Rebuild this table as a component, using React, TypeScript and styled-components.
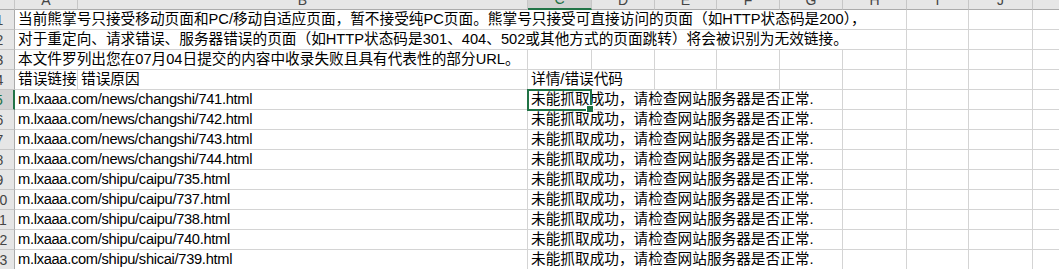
import React from 'react'
import styled, { createGlobalStyle } from 'styled-components'

const GREEN = '#217346'
const GRID = '#d4d4d4'

// widths of the row header and columns A..K
const COLS = [30, 63, 450, 64, 63, 62, 63, 63, 64, 62, 64, 64]
const LETTERS = ['A', 'B', 'C', 'D', 'E', 'F', 'G', 'H', 'I', 'J', 'K']
const TEMPLATE = COLS.map((w) => `${w}px`).join(' ')

const GlobalStyle = createGlobalStyle`
  html, body {
    margin: 0;
    padding: 0;
    background: #fff;
    overflow: hidden;
  }
`

const Sheet = styled.div`
  display: flex;
  flex-direction: column;
  margin-top: -10px;
  margin-left: -15px;
  font-family: "Liberation Sans", "Noto Sans CJK SC", sans-serif;
`

const Row = styled.div`
  display: grid;
  grid-template-columns: ${TEMPLATE};
  height: 20px;
`

const ColHeader = styled.div<{ $active?: boolean }>`
  box-sizing: border-box;
  display: flex;
  align-items: center;
  justify-content: center;
  background: ${(p) => (p.$active ? '#d2d2d2' : '#e6e6e6')};
  color: ${(p) => (p.$active ? GREEN : '#444')};
  border-right: 1px solid #c6c6c6;
  border-bottom: ${(p) => (p.$active ? `2px solid ${GREEN}` : '1px solid #ababab')};
  font-size: 14px;
`

const RowHeader = styled.div<{ $active?: boolean }>`
  box-sizing: border-box;
  display: flex;
  align-items: center;
  justify-content: center;
  background: ${(p) => (p.$active ? '#d2d2d2' : '#e6e6e6')};
  color: ${(p) => (p.$active ? GREEN : '#444')};
  border-right: ${(p) => (p.$active ? `2px solid ${GREEN}` : '1px solid #ababab')};
  border-bottom: 1px solid #c6c6c6;
  font-size: 14px;
`

// Excel's 11pt cell text is 14.67px; URLs are set a touch tighter, like Calibri
const Cell = styled.div<{ $span?: number; $tight?: boolean }>`
  position: relative;
  box-sizing: border-box;
  grid-column: span ${(p) => p.$span ?? 1};
  display: flex;
  align-items: flex-end;
  padding: 0 3px 1px 3px;
  border-right: 1px solid ${GRID};
  border-bottom: 1px solid ${GRID};
  font-size: 14.67px;
  line-height: 18px;
  letter-spacing: ${(p) => (p.$tight ? '-0.3px' : 'normal')};
  color: #000;
  white-space: nowrap;
`

const Selection = styled.div`
  position: absolute;
  left: -1px;
  top: -1px;
  width: 65px;
  height: 22px;
  box-sizing: border-box;
  border: 2px solid ${GREEN};
  z-index: 2;
`

const Handle = styled.div`
  position: absolute;
  right: -4px;
  bottom: -4px;
  width: 6px;
  height: 6px;
  background: ${GREEN};
  border: 1px solid #fff;
`

type CellData = { text?: string; span?: number; selected?: boolean; tight?: boolean }

const empties = (n: number): CellData[] => Array.from({ length: n }, () => ({}))

const REASON = '未能抓取成功，请检查网站服务器是否正常.'
const URLS = [
  'm.lxaaa.com/news/changshi/741.html',
  'm.lxaaa.com/news/changshi/742.html',
  'm.lxaaa.com/news/changshi/743.html',
  'm.lxaaa.com/news/changshi/744.html',
  'm.lxaaa.com/shipu/caipu/735.html',
  'm.lxaaa.com/shipu/caipu/737.html',
  'm.lxaaa.com/shipu/caipu/738.html',
  'm.lxaaa.com/shipu/caipu/740.html',
  'm.lxaaa.com/shipu/shicai/739.html',
]

const rows: CellData[][] = [
  [
    {
      text: '当前熊掌号只接受移动页面和PC/移动自适应页面，暂不接受纯PC页面。熊掌号只接受可直接访问的页面（如HTTP状态码是200），',
      span: 8,
    },
    ...empties(3),
  ],
  [
    {
      text: '对于重定向、请求错误、服务器错误的页面（如HTTP状态码是301、404、502或其他方式的页面跳转）将会被识别为无效链接。',
      span: 8,
    },
    ...empties(3),
  ],
  [{ text: '本文件罗列出您在07月04日提交的内容中收录失败且具有代表性的部分URL。', span: 2 }, ...empties(9)],
  [{ text: '错误链接' }, { text: '错误原因' }, { text: '详情/错误代码', span: 2 }, ...empties(7)],
  ...URLS.map((url, i) => [
    { text: url, span: 2, tight: true },
    { text: REASON, span: 5, selected: i === 0 },
    ...empties(4),
  ]),
]

const App = () => {
  return (
    <>
      <GlobalStyle />
      <Sheet>
        <Row>
          <ColHeader />
          {LETTERS.map((l) => (
            <ColHeader key={l} $active={l === 'C'}>
              {l}
            </ColHeader>
          ))}
        </Row>
        {rows.map((cells, r) => (
          <Row key={r}>
            <RowHeader $active={r === 4}>{r + 1}</RowHeader>
            {cells.map((c, i) => (
              <Cell key={i} $span={c.span} $tight={c.tight}>
                {c.text}
                {c.selected && (
                  <Selection>
                    <Handle />
                  </Selection>
                )}
              </Cell>
            ))}
          </Row>
        ))}
      </Sheet>
    </>
  )
}

export default App
